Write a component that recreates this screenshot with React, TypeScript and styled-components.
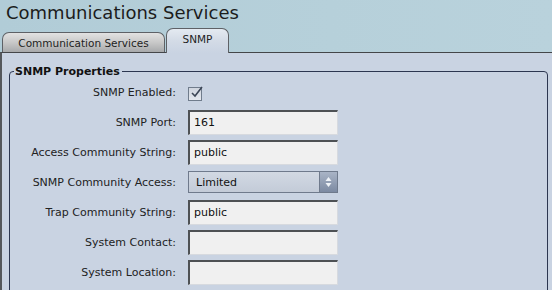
import React from "react";
import styled, { createGlobalStyle } from "styled-components";

const Global = createGlobalStyle`
  html, body { margin: 0; padding: 0; }
  body { width: 552px; height: 290px; overflow: hidden; font-family: "DejaVu Sans", Verdana, sans-serif; }
`;

const Page = styled.div`
  width: 552px;
  height: 290px;
  overflow: hidden;
  display: flex;
  flex-direction: column;
  background: #c9d3e2;
`;

const Header = styled.div`
  height: 52px;
  flex: none;
  display: flex;
  flex-direction: column;
  justify-content: space-between;
  background: linear-gradient(to right, #b1ccd7, #b6d0da 60%, #b9d2dc);
`;

const Title = styled.h1`
  margin: 0;
  padding: 2px 0 0 6px;
  font-family: "DejaVu Sans", Verdana, sans-serif;
  font-weight: normal;
  font-size: 18px;
  line-height: 22px;
  color: #1c1c1c;
`;

const TabStrip = styled.div`
  display: flex;
  align-items: flex-end;
  padding-left: 2px;
  gap: 1px;
  height: 24px;
`;

const Tab = styled.div<{ $active?: boolean; $w: number }>`
  width: ${(p) => p.$w}px;
  box-sizing: border-box;
  height: ${(p) => (p.$active ? 25 : 20)}px;
  margin-bottom: ${(p) => (p.$active ? -1 : 0)}px;
  position: relative;
  z-index: ${(p) => (p.$active ? 2 : 1)};
  border: 1px solid #5e6166;
  border-bottom: none;
  border-radius: 7px 7px 0 0;
  background: ${(p) =>
    p.$active
      ? "linear-gradient(to bottom, #e4eaf1, #d3dbe6 50%, #c9d3e2)"
      : "linear-gradient(to bottom, #e2e2e2, #c8c8c8 50%, #a7a9ab)"};
  display: flex;
  justify-content: center;
  align-items: ${(p) => (p.$active ? "flex-start" : "center")};
  padding-top: ${(p) => (p.$active ? 4 : 0)}px;
  font-size: 10.5px;
  color: #1e1e1e;
`;

const Content = styled.div`
  flex: 1;
  min-height: 0;
  border-top: 1px solid #444649;
  border-left: 2px solid #55585c;
  padding: 12px 4px 0 7px;
  position: relative;
  z-index: 1;
`;

const Fieldset = styled.fieldset`
  margin: 0;
  padding: 0;
  border: 1px solid #2c3650;
  border-radius: 4px;
  height: 240px;
  box-sizing: border-box;
`;

const Legend = styled.legend`
  padding: 0 2px 0 1px;
  margin-left: 4px;
  font-weight: bold;
  font-size: 11px;
  color: #111;
`;

const Form = styled.div`
  display: grid;
  grid-template-columns: 166px 150px;
  column-gap: 12px;
  grid-auto-rows: 30px;
  align-items: center;
  margin-top: -1px;
`;

const Label = styled.div`
  text-align: right;
  font-size: 11px;
  color: #222;
  padding-top: 1px;
`;

const Check = styled.div`
  width: 14px;
  height: 14px;
  box-sizing: border-box;
  border: 1px solid #707c8c;
  background: linear-gradient(to bottom, #d0d6df, #e4e8ee);
  position: relative;
  margin-top: 4px;
`;

const CheckMark = styled.svg`
  position: absolute;
  left: 1px;
  top: -3px;
`;

const Input = styled.div`
  height: 25px;
  box-sizing: border-box;
  border-top: 2px solid #4e5154;
  border-left: 2px solid #4e5154;
  border-right: 1px solid #d7dadf;
  border-bottom: 1px solid #d7dadf;
  background: #f0f0f0;
  display: flex;
  align-items: center;
  padding-left: 4px;
  font-size: 11px;
  color: #111;
`;

const Select = styled.div`
  height: 22px;
  box-sizing: border-box;
  border: 1px solid #6f7a8c;
  background: linear-gradient(to bottom, #d2d9e3, #c3cbd8);
  display: flex;
  align-items: stretch;
  font-size: 11px;
  color: #111;
`;

const SelectText = styled.div`
  flex: 1;
  display: flex;
  align-items: center;
  padding-left: 7px;
`;

const SelectBtn = styled.div`
  width: 17px;
  border-left: 1px solid #6f7a8c;
  background: linear-gradient(to bottom, #a9b4c6, #7c8aa2);
  display: flex;
  align-items: center;
  justify-content: center;
`;

const rows: { label: string; value?: string; kind: "check" | "input" | "select" }[] = [
  { label: "SNMP Enabled:", kind: "check" },
  { label: "SNMP Port:", value: "161", kind: "input" },
  { label: "Access Community String:", value: "public", kind: "input" },
  { label: "SNMP Community Access:", value: "Limited", kind: "select" },
  { label: "Trap Community String:", value: "public", kind: "input" },
  { label: "System Contact:", value: "", kind: "input" },
  { label: "System Location:", value: "", kind: "input" },
];

export default function App() {
  return (
    <>
      <Global />
      <Page>
        <Header>
          <Title>Communications Services</Title>
          <TabStrip>
            <Tab $w={163}>Communication Services</Tab>
            <Tab $w={63} $active>SNMP</Tab>
          </TabStrip>
        </Header>
        <Content>
          <Fieldset>
            <Legend>SNMP Properties</Legend>
            <Form>
              {rows.map((r) => (
                <React.Fragment key={r.label}>
                  <Label>{r.label}</Label>
                  {r.kind === "check" && (
                    <div>
                      <Check>
                        <CheckMark width="14" height="14" viewBox="0 0 14 14">
                          <path d="M2 8 L5 11 L12 2" stroke="#3c4656" strokeWidth="1.6" fill="none" />
                        </CheckMark>
                      </Check>
                    </div>
                  )}
                  {r.kind === "input" && <Input>{r.value}</Input>}
                  {r.kind === "select" && (
                    <Select>
                      <SelectText>{r.value}</SelectText>
                      <SelectBtn>
                        <svg width="9" height="14" viewBox="0 0 9 14">
                          <path d="M4.5 2 L7.5 6 L1.5 6 Z" fill="#eef2f7" />
                          <path d="M4.5 12 L7.5 8 L1.5 8 Z" fill="#eef2f7" />
                        </svg>
                      </SelectBtn>
                    </Select>
                  )}
                </React.Fragment>
              ))}
            </Form>
          </Fieldset>
        </Content>
      </Page>
    </>
  );
}
